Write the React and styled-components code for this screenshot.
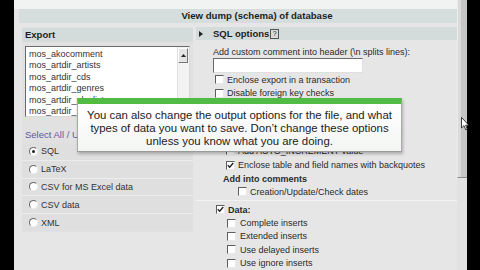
import React from "react";
import styled, { createGlobalStyle } from "styled-components";

const Global = createGlobalStyle`
  html, body { margin: 0; padding: 0; background: #000; }
  body { font-family: "Liberation Sans", Arial, sans-serif; }
`;

const Page = styled.div`
  position: relative;
  width: 480px;
  height: 270px;
  overflow: hidden;
  display: flex;
  background: #000;
`;

const BlackBand = styled.div`
  width: ${(p) => p.w}px;
  flex: none;
  background: #000;
`;

const Main = styled.div`
  width: 443px;
  flex: none;
  background: #e6e6e6;
  display: flex;
  flex-direction: column;
  color: #2a2a2a;
  font-size: 9px;
`;

const TopStrip = styled.div`
  height: 9px;
  background: #f1f2f2;
`;

const TitleBar = styled.div`
  margin-left: 5px;
  height: 14px;
  background: #d5dddd;
  font-weight: bold;
  font-size: 9.6px;
  line-height: 14px;
  text-align: center;
  padding-left: 38px;
  color: #1e1e1e;
`;

const Body = styled.div`
  display: flex;
  gap: 3px;
  padding-top: 4px;
  flex: 1;
  min-height: 0;
`;

const LeftPanel = styled.div`
  margin-left: 8px;
  width: 171px;
  height: 205px;
  flex: none;
  background: #e1e1e1;
  display: flex;
  flex-direction: column;
`;

const PanelHead = styled.div`
  height: 14px;
  margin-top: 1px;
  background: #d3dbdb;
  font-weight: bold;
  font-size: 9.5px;
  line-height: 14px;
  padding-left: 3px;
  color: #1e1e1e;
`;

const SelectBox = styled.div`
  margin: 4px 3px 0 3px;
  height: 71px;
  background: #fff;
  border: 1px solid;
  border-color: #6a6a6a #d8d8d8 #d8d8d8 #6a6a6a;
  box-sizing: border-box;
  display: flex;
  overflow: hidden;
`;

const OptionList = styled.div`
  flex: 1;
  padding: 2px 0 0 3px;
`;

const OptionItem = styled.div`
  height: 11.4px;
  line-height: 11.4px;
  font-size: 9px;
  color: #333;
  white-space: nowrap;
`;

const ScrollCol = styled.div`
  width: 11px;
  flex: none;
  background: #f3f3f3;
  border-left: 1px solid #e0e0e0;
  display: flex;
  flex-direction: column;
`;

const ScrollBtn = styled.div`
  height: 15px;
  margin: 1px 1px 0 0;
  background: #e4e4e4;
  border: 1px solid;
  border-color: #fff #777 #777 #fff;
  box-sizing: border-box;
  display: flex;
  align-items: center;
  justify-content: center;
`;

const SelectAll = styled.div`
  margin-top: 12px;
  height: 12px;
  line-height: 12px;
  padding-left: 3px;
  font-size: 9.5px;
  color: #5a5aa6;
`;

const RadioBox = styled.div`
  margin-top: 2px;
  display: flex;
  flex-direction: column;
  gap: 1px;
  background: #ececec;
`;

const RadioRow = styled.div`
  height: 16.8px;
  background: #dfdfdf;
  display: flex;
  align-items: center;
  padding-left: 7px;
  gap: 3px;
  font-size: 9px;
  color: #333;
`;

const Radio = styled.span`
  width: 7px;
  height: 7px;
  border-radius: 50%;
  border: 1px solid;
  border-color: #6a6a6a #eee #eee #6a6a6a;
  background: #fff;
  display: inline-flex;
  align-items: center;
  justify-content: center;
  flex: none;
  &::after {
    content: "";
    width: 3px;
    height: 3px;
    border-radius: 50%;
    background: ${(p) => (p.checked ? "#222" : "transparent")};
  }
`;

const RightPanel = styled.div`
  flex: 1;
  display: flex;
  flex-direction: column;
`;

const OptHead = styled.div`
  height: 13px;
  background: #d3dbdb;
  display: flex;
  align-items: center;
  padding-left: 3px;
  font-weight: bold;
  font-size: 9.5px;
  color: #1e1e1e;
`;

const Arrow = styled.span`
  width: 0;
  height: 0;
  border-top: 3px solid transparent;
  border-bottom: 3px solid transparent;
  border-left: 4px solid #222;
  margin-right: 10px;
`;

const Help = styled.span`
  display: inline-block;
  width: 7px;
  height: 8px;
  border: 1px solid #555;
  font-size: 7px;
  line-height: 8px;
  text-align: center;
  font-weight: normal;
  margin-left: 1px;
`;

const Content = styled.div`
  padding-left: 17px;
  display: flex;
  flex-direction: column;
`;

const Label = styled.div`
  margin-top: 6px;
  height: 12px;
  line-height: 12px;
  font-size: 9px;
  color: #2a2a2a;
`;

const TextInput = styled.div`
  width: 150px;
  height: 15px;
  box-sizing: border-box;
  background: #fff;
  border: 1px solid;
  border-color: #6a6a6a #e0e0e0 #e0e0e0 #6a6a6a;
`;

const Row = styled.div`
  height: ${(p) => p.h}px;
  display: flex;
  align-items: center;
  padding-left: ${(p) => p.indent || 0}px;
  gap: ${(p) => p.gap ?? 3}px;
  font-size: 9px;
  font-weight: ${(p) => (p.bold ? "bold" : "normal")};
  color: #2a2a2a;
  white-space: nowrap;
`;

const Box = styled.span`
  width: 9px;
  height: 9px;
  box-sizing: border-box;
  flex: none;
  background: #fff;
  border: 1px solid;
  border-color: #5e5e5e #e8e8e8 #e8e8e8 #5e5e5e;
  display: inline-flex;
  align-items: center;
  justify-content: center;
`;

const Separator = styled.div`
  height: 1px;
  background: #f3f3f3;
  margin: 2px 0 2px -17px;
`;

const ScrollBar = styled.div`
  width: 10px;
  flex: none;
  display: flex;
  flex-direction: column;
  background: #e2e2e2;
`;

const Thumb = styled.div`
  height: 178px;
  box-sizing: border-box;
  background: linear-gradient(90deg, #dadada 0 30%, #c6c6c6 30% 100%);
  border-left: 1px solid #ececec;
  border-bottom: 1px solid #8a8a8a;
`;

const Callout = styled.div`
  position: absolute;
  left: 77px;
  top: 98px;
  width: 325px;
  height: 54px;
  box-sizing: border-box;
  background: linear-gradient(#ffffff, #f3f5f3);
  border-top: 6px solid #52bb45;
  border-left: 1px solid #7ccc70;
  border-right: 1px solid #7ccc70;
  border-bottom: 1px solid #9a9a9a;
  box-shadow: 1px 2px 3px rgba(0, 0, 0, 0.25);
  padding-top: 5px;
  text-align: center;
  font-family: "Liberation Sans", Arial, sans-serif;
  font-size: 11.4px;
  line-height: 13px;
  color: #1b1b1b;
`;

const Cursor = styled.svg`
  position: absolute;
  left: 461px;
  top: 117px;
`;

function Check({ checked }) {
  return (
    <Box>
      {checked && (
        <svg width="7" height="7" viewBox="0 0 7 7">
          <path d="M0.8 3.2 L2.7 5.2 L6.2 1" fill="none" stroke="#222" strokeWidth="1.4" />
        </svg>
      )}
    </Box>
  );
}

const tables = [
  "mos_akocomment",
  "mos_artdir_artists",
  "mos_artdir_cds",
  "mos_artdir_genres",
  "mos_artdir_playlists",
  "mos_artdir_songs",
];

const formats = [
  ["SQL", true],
  ["LaTeX", false],
  ["CSV for MS Excel data", false],
  ["CSV data", false],
  ["XML", false],
];

export default function App() {
  return (
    <Page>
      <Global />
      <BlackBand w={14} />
      <Main>
        <TopStrip />
        <TitleBar>View dump (schema) of database</TitleBar>
        <Body>
          <LeftPanel>
            <PanelHead>Export</PanelHead>
            <SelectBox>
              <OptionList>
                {tables.map((t) => (
                  <OptionItem key={t}>{t}</OptionItem>
                ))}
              </OptionList>
              <ScrollCol>
                <ScrollBtn>
                  <svg width="5" height="3" viewBox="0 0 5 3">
                    <path d="M0 3 L2.5 0 L5 3 Z" fill="#222" />
                  </svg>
                </ScrollBtn>
              </ScrollCol>
            </SelectBox>
            <SelectAll>Select All / Unselect All</SelectAll>
            <RadioBox>
              {formats.map(([f, c]) => (
                <RadioRow key={f}>
                  <Radio checked={c} />
                  {f}
                </RadioRow>
              ))}
            </RadioBox>
          </LeftPanel>
          <RightPanel>
            <OptHead>
              <Arrow />
              SQL options<Help>?</Help>
            </OptHead>
            <Content>
              <Label>Add custom comment into header (\n splits lines):</Label>
              <TextInput />
              <Row h={13} indent={2}>
                <Check />
                Enclose export in a transaction
              </Row>
              <Row h={14.4} indent={2}>
                <Check />
                Disable foreign key checks
              </Row>
              <Row h={14.4} indent={2} bold>
                <Check checked />
                Structure:
              </Row>
              <Row h={14.4} indent={13}>
                <Check />
                Add DROP TABLE
              </Row>
              <Row h={14.4} indent={13}>
                <Check />
                Add IF NOT EXISTS
              </Row>
              <Row h={14.4} indent={13}>
                <Check />
                Add AUTO_INCREMENT value
              </Row>
              <Row h={14.4} indent={13}>
                <Check checked />
                Enclose table and field names with backquotes
              </Row>
              <Row h={13} indent={10} bold>
                Add into comments
              </Row>
              <Row h={13} indent={25}>
                <Check />
                Creation/Update/Check dates
              </Row>
              <Separator />
              <Row h={13} indent={3} bold>
                <Check checked />
                Data:
              </Row>
              <Row h={13.4} indent={14} gap={4}>
                <Check />
                Complete inserts
              </Row>
              <Row h={13.4} indent={14} gap={4}>
                <Check />
                Extended inserts
              </Row>
              <Row h={13.4} indent={14} gap={4}>
                <Check />
                Use delayed inserts
              </Row>
              <Row h={13.4} indent={14} gap={4}>
                <Check />
                Use ignore inserts
              </Row>
            </Content>
          </RightPanel>
        </Body>
      </Main>
      <ScrollBar>
        <Thumb />
      </ScrollBar>
      <BlackBand w={13} />
      <Callout>
        You can also change the output options for the file, and what
        <br />
        types of data you want to save. Don’t change these options
        <br />
        unless you know what you are doing.
      </Callout>
      <Cursor width="8" height="14" viewBox="0 0 8 14">
        <path d="M0.5 0.5 L0.5 11 L3 8.6 L4.8 12.8 L6.3 12.1 L4.6 8.2 L7.8 8.2 Z" fill="#fff" stroke="#111" strokeWidth="0.8" />
      </Cursor>
    </Page>
  );
}
